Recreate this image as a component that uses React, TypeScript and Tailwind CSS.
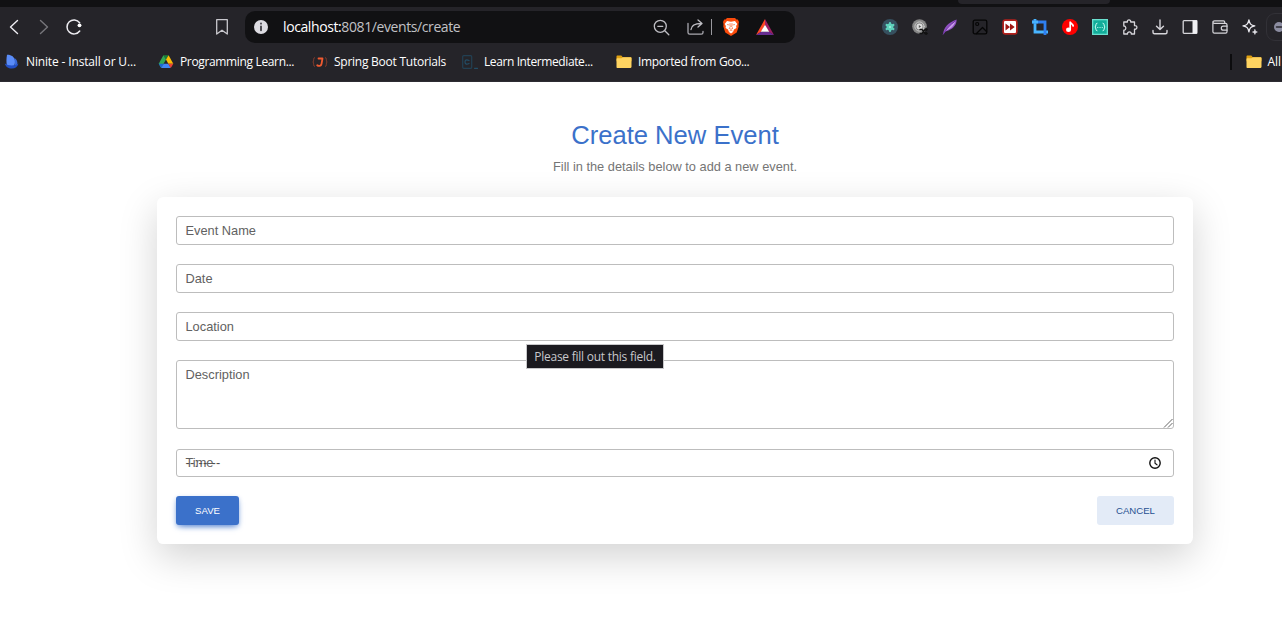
import type { ReactNode } from "react";

function Svg({ s = 16, vb = "0 0 16 16", children }: { s?: number; vb?: string; children: ReactNode }) {
  return (
    <svg width={s} height={s} viewBox={vb} fill="none" className="block shrink-0" strokeLinecap="round" strokeLinejoin="round">
      {children}
    </svg>
  );
}

const LINE = "#d6d5da";

const extensions: ReactNode[] = [
  <Svg key="atom">
    <circle cx="8" cy="8" r="8" fill="#36505f" />
    <g stroke="#5fd3bd" strokeWidth="2.200">
      <path d="M8 4v8M4.600 6l6.800 4M11.400 6l-6.800 4" />
    </g>
    <circle cx="8" cy="8" r="3.400" fill="#5fd3bd" />
    <circle cx="8" cy="8" r="1" fill="#a6f0e0" />
  </Svg>,
  <Svg key="shuffle">
    <circle cx="7.5" cy="7.5" r="7.3" fill="#858585" />
    <circle cx="7.5" cy="7.5" r="4.6" stroke="#c9c9c9" strokeWidth="1" />
    <circle cx="7.5" cy="7.5" r="3" fill="#dedede" />
    <path d="M6.8 6v3l2.3-1.5z" fill="#555" />
    <path d="M8 10.5h2l3 4h2M8 14.5h2l3-4h2M14 9.5l1.2 1-1.2 1M14 13.5l1.2 1-1.2 1" stroke="#111" strokeWidth="1.3" />
  </Svg>,
  <Svg key="feather">
    <path d="M1.2 15.2C1.5 9 6 3.5 14.6.6 14.8 5 12 10.5 3.6 12.4z" fill="#8e4fc0" />
    <path d="M3 12C6 8 9 5 13.5 2.2 12.5 6 9 10 4.5 11.2z" fill="#c79be8" />
    <path d="M1.2 15.2C4 10 8 6 13 2.2" stroke="#7338a8" strokeWidth="1" />
  </Svg>,
  <Svg key="image">
    <rect x="1.2" y="1.2" width="13.6" height="13.6" rx="1.6" stroke="#050505" strokeWidth="1.3" />
    <circle cx="5.2" cy="5" r="1.5" stroke="#050505" strokeWidth="1.2" />
    <path d="M4.5 14.5l6-6 4 4" stroke="#050505" strokeWidth="1.3" />
  </Svg>,
  <Svg key="forward">
    <rect x=".3" y=".3" width="15.4" height="15.4" rx="3.2" fill="#b3211c" />
    <rect x="2" y="2" width="12" height="12" rx="1" fill="#fff" />
    <path d="M3.5 4.5L8 8l-4.500 3.500zM8 4.500L12.700 8 8 11.500z" fill="#a01713" />
  </Svg>,
  <Svg key="crop">
    <path d="M3 0v13h13" stroke="#48b4ff" strokeWidth="2.800" strokeLinecap="butt" strokeLinejoin="miter" />
    <path d="M0 3h13v13" stroke="#2f7ff0" strokeWidth="2.800" strokeLinecap="butt" strokeLinejoin="miter" />
    <path d="M0 3h6" stroke="#48b4ff" strokeWidth="2.800" strokeLinecap="butt" />
  </Svg>,
  <Svg key="music">
    <circle cx="8" cy="8" r="8" fill="#fe0000" />
    <ellipse cx="6.500" cy="10.700" rx="2.500" ry="2.300" fill="#fff" />
    <path d="M8.200 10.500V3.200c.8 1.600 2.600 1.500 3 3.800" stroke="#fff" strokeWidth="1.700" />
  </Svg>,
  <Svg key="json">
    <path d="M0 0h16v16H0z" fill="#6be0cf" />
    <path d="M1.300 1.300h13.400v13.400H1.300z" fill="#12ad9a" />
    <path d="M5 4.200c-2 0-.5 3-2 3.800 1.500.8 0 3.800 2 3.800M11 4.200c2 0 .5 3 2 3.800-1.500.8 0 3.800-2 3.800" stroke="#d2fff7" />
    <path d="M5.700 8.500h.2M8 8.500h.1M10.200 8.500h.1" stroke="#d2fff7" strokeWidth="1.100" />
  </Svg>,
  <Svg key="puzzle">
    <path d="M1.800 3h3.600C4.700.2 9.300.2 8.700 3h3.800v3.700c3.200-.7 3.200 4.200 0 3.500V15H9.300c.5-2.800-4.300-2.800-3.800 0H1.800v-3.800c2.700.4 2.700-4.600 0-4.200z" stroke={LINE} strokeWidth="1.300" />
  </Svg>,
  <Svg key="download">
    <path d="M8 1v9.300M4.500 7.200L8 10.600l3.500-3.400M1 11.500v1.700c0 .9.600 1.500 1.500 1.500h11c.9 0 1.500-.6 1.500-1.500v-1.700" stroke={LINE} strokeWidth="1.400" />
  </Svg>,
  <Svg key="panel">
    <rect x="1.200" y="1.700" width="13.600" height="12.600" rx=".8" stroke={LINE} strokeWidth="1.300" />
    <path d="M10.500 1.300h4.700v13.400h-4.700z" fill="#f0f0f3" />
  </Svg>,
  <Svg key="wallet">
    <path d="M12.700 4.200V3c0-.7-.5-1.200-1.200-1.200h-9C1.500 1.800.9 2.400.9 3s.5 1.400 1.600 1.400h11c.8 0 1.500.5 1.500 1.300v7.100c0 .8-.6 1.400-1.400 1.400H2.400c-.9 0-1.500-.6-1.500-1.400V3" stroke={LINE} strokeWidth="1.200" />
    <path d="M15 7.200h-3.700a2 2 0 000 4H15" stroke={LINE} strokeWidth="1.200" />
  </Svg>,
  <Svg key="sparkle">
    <path d="M6.900.9c.8 4 1.900 5.200 5.900 6-4 .8-5.100 1.900-5.900 6-.8-4.100-1.900-5.200-5.900-6 4-.8 5.100-2 5.900-6z" stroke="#e9e8ee" strokeWidth="1.300" />
    <path d="M12.900 10.500l.7 1.800 1.800.7-1.800.7-.7 1.800-.7-1.800-1.800-.7 1.800-.7z" fill="#e9e8ee" stroke="#e9e8ee" strokeWidth=".5" />
  </Svg>,
];

function Folder() {
  return (
    <Svg>
      <path d="M.5 2.500c0-.6.4-1 1-1h3.800l1.500 1.700h7.700c.6 0 1 .4 1 1v3H.5z" fill="#e0a010" />
      <path d="M.5 5.200c0-.6.4-1 1-1h4l1.300-.9h7.700c.6 0 1 .4 1 1v8.500c0 .7-.4 1.100-1 1.100h-13c-.6 0-1-.4-1-1z" fill="#ffd461" />
    </Svg>
  );
}

function Ninite() {
  return (
    <Svg>
      <path d="M3 .8C7 .5 10.500 3 11 6.500c.3 2.500-.3 5-2 6.500L3 12C2 8 2.500 4 3 .8z" fill="#5a8cf8" />
      <path d="M10.500 4c2.300 1.200 3.300 4 2.800 6.500L11 12z" fill="#3969d8" />
      <path d="M.8 9.500c4 2.500 10 2.500 13.700 0-.7 3-3.200 5-6.700 5S1.500 12.500.8 9.500z" fill="#2350c6" />
    </Svg>
  );
}

function Drive() {
  return (
    <Svg>
      <path d="M5.400 1.300h5.200L8 5.600z" fill="#188038" />
      <path d="M5.400 1.300L.7 9.800l2.500 4.300L8 5.600z" fill="#34a853" />
      <path d="M10.600 1.300l4.700 8.500h-5L8 5.600z" fill="#fbbc04" />
      <path d="M.7 9.800h5L3.200 14.100z" fill="#1967d2" />
      <path d="M5.700 9.800h4.600l2.500 4.300H3.200z" fill="#4285f4" />
      <path d="M10.300 9.800h5l-2.500 4.300z" fill="#ea4335" />
    </Svg>
  );
}

function Resize() {
  return (
    <svg width="10" height="10" viewBox="0 0 10 10" className="absolute right-0 bottom-0">
      <path d="M1 9.500l8.500-8.500M5 9.500L9.500 5" stroke="#555" strokeWidth=".9" />
    </svg>
  );
}

function Field({ label }: { label: string }) {
  return (
    <div className="flex h-[29px] items-center rounded-[3px] border border-[#bdbdbd] px-[8.500px] pt-px text-[12.800px] leading-[18px] text-[#616161]">
      {label}
    </div>
  );
}

const mark = "flex h-4 shrink-0 items-center whitespace-nowrap";

export default function App() {
  return (
    <div className="h-[617px] w-full overflow-hidden bg-white font-['Liberation_Sans',Arial,sans-serif]">
      <header className="h-[82px] overflow-hidden border-b border-[#2e2d33] bg-[#252429] font-['Open_Sans','Noto_Sans',sans-serif] text-white">
        <div className="h-[7px] bg-[#111113] pl-[958px]">
          <div className="h-1 w-[152px] rounded-b-[5px] bg-[#252429]" />
        </div>
        <div className="flex h-10 items-center">
          <div className="flex w-[245px] shrink-0 items-center pl-1.5">
            <Svg>
              <path d="M11.500 1.500L4.500 8l7 6.500" stroke="#eeedf2" strokeWidth="1.400" />
            </Svg>
            <div className="ml-3.5">
              <Svg>
                <path d="M4.500 1.500l7 6.500-7 6.500" stroke="#77767b" strokeWidth="1.400" />
              </Svg>
            </div>
            <div className="ml-3.5">
              <Svg>
                <path d="M13.600 3.700A7 7 0 1013.700 12" stroke="#eeedf2" strokeWidth="1.500" />
                <circle cx="13.500" cy="6.300" r="1.900" fill="#fff" />
              </Svg>
            </div>
            <div className="ml-[132px]">
              <Svg>
                <path d="M2.700.7h10.600v14.300L8 11.200 2.700 15z" stroke="#c9c8cd" strokeWidth="1.300" />
              </Svg>
            </div>
          </div>
          <div className="flex h-8 w-[550px] shrink-0 items-center rounded-[10px] bg-[#111113] pl-[9px]">
            <Svg s={14} vb="0 0 14 14">
              <circle cx="7" cy="7" r="7" fill="#dddce2" />
              <path d="M7 3.400v.3M7 6.300v4" stroke="#333238" strokeWidth="1.700" />
            </Svg>
            <span className="ml-[15px] w-[370px] whitespace-nowrap text-[14px] leading-5 tracking-[-0.400px] text-[#c2c2c6]">
              <span className="text-white">localhost:</span>8081/events/create
            </span>
            <Svg s={17} vb="0 0 17 17">
              <circle cx="7.300" cy="7.300" r="6" stroke="#bebdc3" strokeWidth="1.300" />
              <path d="M4.800 7.300h5M11.800 11.800l4 4" stroke="#bebdc3" strokeWidth="1.300" />
            </Svg>
            <div className="ml-[17px]">
              <Svg s={17} vb="0 0 17 17">
                <path d="M1 4.500v9c0 1 .7 1.700 1.700 1.700h11.600c1 0 1.700-.700 1.700-1.700v-1" stroke="#aaa9b0" strokeWidth="1.300" />
                <path d="M4 10.500c.5-4 3.500-6 10-6M11 1l4 3.500-4 3.500" stroke="#bebdc3" strokeWidth="1.300" />
              </Svg>
            </div>
            <div className="ml-[7px] h-4 w-px bg-[#9a999f]" />
            <div className="ml-2.5">
              <svg width="18" height="18" viewBox="0 0 18 18" className="block">
                <path d="M5 0h8l1.500 1.500h1.300L17 4l-.5 2 .2 2.500-2 6L9 18l-5.700-3.500-2-6L1.500 6 1 4l1.200-2.500h1.300z" fill="#fb4b0b" />
                <path d="M5 3l4 .7L13 3l2.300 3-1.200 2 .3 2-2.400 1.500L11 14l-2 1.500L7 14l-1-2.500L3.600 10l.3-2-1.200-2z" fill="#fff" />
                <path d="M5 6.500l2.500.5M13 6.500l-2.500.5M8 5l.3 4L7 10.300l2 1 2-1L9.700 9l.3-4M7.500 13L9 12l1.500 1" fill="none" stroke="#fb4b0b" strokeWidth=".6" />
              </svg>
            </div>
            <div className="ml-4">
              <svg width="18" height="16" viewBox="0 0 18 16" className="block">
                <path d="M9 0L0 16l5-3 4-7z" fill="#ff4724" />
                <path d="M9 0l9 16-5-3-4-7z" fill="#9e1f63" />
                <path d="M0 16l5-3.300h8l5 3.300z" fill="#662d91" />
                <path d="M9 5.700l4.200 7H4.800z" fill="#fff" />
              </svg>
            </div>
          </div>
          <div className="ml-20 flex shrink-0">
            {extensions.map((icon, i) => (
              <div key={i} className="flex w-[30px] justify-center">
                {icon}
              </div>
            ))}
          </div>
          <div className="ml-px flex h-7 w-16 shrink-0 items-center rounded-[9px] border border-[#323137] pl-[7px]">
            <Svg s={10} vb="0 0 10 10">
              <circle cx="5" cy="5" r="5" fill="#8c8da1" />
              <path d="M2.500 5h5" stroke="#29282f" strokeWidth="1.500" />
            </Svg>
          </div>
        </div>
        <div className="flex h-[30px] items-center text-[12px]">
          <div className={`${mark} w-[154px] gap-1.5 pl-1`}>
            <Ninite />
            <span className="tracking-[-0.150px]">Ninite - Install or U...</span>
          </div>
          <div className={`${mark} w-[154px] gap-1.5 pl-1`}>
            <Drive />
            <span className="tracking-[-0.350px]">Programming Learn...</span>
          </div>
          <div className={`${mark} w-[150px] gap-1.5 pl-1`}>
            <Svg>
              <path d="M2.500 3.500C1 3.500 2.200 7 1 8c1.200 1 0 4.500 1.500 4.500M13.500 3.500c1.500 0 .3 3.500 1.500 4.500-1.200 1 0 4.500-1.500 4.500" stroke="#91402c" strokeWidth=".9" />
              <path d="M6.500 4.500h4L9.500 10c-.4 2-2.800 2.500-4.300 1.300" stroke="#f05a30" strokeWidth="1.800" />
            </Svg>
            <span className="tracking-[-0.250px]">Spring Boot Tutorials</span>
          </div>
          <div className={`${mark} w-[154px] gap-1.5 pl-1`}>
            <Svg>
              <rect x=".7" y="1.700" width="9" height="12.600" rx="1" stroke="#224053" strokeWidth="1.200" />
              <path d="M7 6.500c-3-1.500-4 0-4 1.500s1 3 4 1.500M12.500 14.300h3" stroke="#224d66" strokeWidth="1.200" />
            </Svg>
            <span className="tracking-[-0.400px]">Learn Intermediate...</span>
          </div>
          <div className={`${mark} w-[618px] gap-1.5 pl-1`}>
            <Folder />
            <span className="tracking-[-0.350px]">Imported from Goo...</span>
          </div>
          <div className="h-4 w-[1.500px] shrink-0 bg-[#0c0c0e]" />
          <div className={`${mark} ml-3.5 gap-1.5`}>
            <Folder />
            <span>All Bookmarks</span>
          </div>
        </div>
      </header>

      <main className="w-[1350px] pt-[38px]">
        <h1 className="text-center text-[25.600px] leading-[31px] text-[#3b71ca]">Create New Event</h1>
        <p className="mt-1.5 text-center text-[12.800px] leading-5 text-[#757575]">Fill in the details below to add a new event.</p>
        <section className="mx-auto mt-5 h-[347px] w-[1036px] rounded-[6.400px] bg-white px-[19px] pt-[19px] shadow-[0_12.800px_38.400px_rgba(0,0,0,0.175)]">
          <div className="flex flex-col gap-[19px]">
            <Field label="Event Name" />
            <Field label="Date" />
            <div className="relative">
              <Field label="Location" />
              <div className="absolute top-8 left-[350px] z-10 flex h-[25px] w-[138px] items-center justify-center border border-[#c8c8ca] bg-[#1b1a1f] font-['Open_Sans','Noto_Sans',sans-serif] text-[12px] tracking-[-0.250px] whitespace-nowrap text-[#c8c8cc]">
                Please fill out this field.
              </div>
            </div>
            <div className="relative h-[69px] rounded-[3px] border border-[#bdbdbd] px-[8.500px] pt-[5px] text-[12.800px] leading-[18px] text-[#616161]">
              Description
              <Resize />
            </div>
            <div className="mt-px flex h-7 items-center justify-between rounded-[3px] border border-[#bdbdbd] pr-3 pb-px pl-[8.500px] text-[12.800px] text-[#616161]">
              <div className="relative">
                Time
                <span className="absolute top-0 left-0 tracking-[0.300px] whitespace-nowrap text-[#4f4f4f]">--:-- --</span>
              </div>
              <Svg s={12} vb="0 0 12 12">
                <circle cx="6" cy="6" r="5.200" stroke="#111" strokeWidth="1.400" />
                <path d="M6 3v3.300l2 1.500" stroke="#111" strokeWidth="1.100" />
              </Svg>
            </div>
            <div className="flex justify-between text-[9.600px]">
              <button className="h-[29px] w-[63px] rounded-[3px] bg-[#3b71ca] pt-px text-white shadow-[0_3px_7px_-3px_#3b71ca,0_2px_4px_rgba(59,113,202,0.300)]">SAVE</button>
              <button className="h-[29px] w-[77px] rounded-[3px] bg-[#e3ebf7] pt-px text-[#285192]">CANCEL</button>
            </div>
          </div>
        </section>
      </main>
    </div>
  );
}
